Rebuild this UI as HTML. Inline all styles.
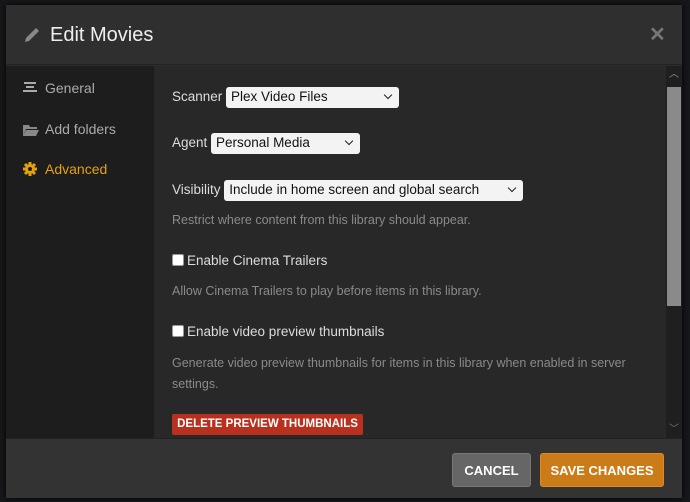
<!DOCTYPE html>
<html><head><style>
*{box-sizing:border-box;margin:0;padding:0}
body{width:690px;height:502px;background:#16181b;font-family:"Liberation Sans",sans-serif;position:relative;overflow:hidden}
.m{position:absolute;left:6px;top:5px;width:676px;height:493px;background:#2d2d2d;box-shadow:0 0 6px #000}
.hd{position:absolute;left:0;top:0;width:676px;height:60px;background:#2f2f2f;border-bottom:1px solid #222}
.hd h1{position:absolute;left:44px;top:19px;font-size:20px;font-weight:normal;color:#eee}
.x{position:absolute;left:643px;top:17px;color:#777;font-size:20px;font-weight:bold}
.sb{position:absolute;left:0;top:61px;width:148px;height:372px;background:#1d1d1d}
.sb div{position:absolute;left:39px;font-size:14px;color:#aaa}
.ct{position:absolute;left:148px;top:61px;width:512px;height:372px;background:#282828;color:#ddd;font-size:13.5px}
.ct .r{position:absolute;left:18px}
.sel{display:inline-block;background:#f3f3f3;color:#111;border-radius:3px;height:21px;padding:2px 5px;font-size:13.5px;vertical-align:middle;position:relative}
.sel:after{content:"";position:absolute;right:8px;top:5px;width:5px;height:5px;border-right:1.5px solid #222;border-bottom:1.5px solid #222;transform:rotate(45deg)}
.h{color:#8a8a8a;font-size:12.5px}
.cb{display:inline-block;width:12px;height:12px;background:#fff;border:1px solid #999;border-radius:2px;vertical-align:-1px;margin-right:3px}
.scr{position:absolute;left:660px;top:61px;width:16px;height:372px;background:#1f1f1f}
.ft{position:absolute;left:0;top:433px;width:676px;height:60px;background:#333;border-top:1px solid #222}
.btn{position:absolute;top:14px;height:34px;border-radius:3px;color:#fff;font-weight:bold;font-size:13px;text-align:center;line-height:34px}
</style></head><body>
<div class="m">
<div class="hd">
<svg style="position:absolute;left:17px;top:21px" width="18" height="18" viewBox="0 0 18 18"><path d="M2 16 L3 12 L13 2 L16 5 L6 15 Z" fill="#888"/></svg>
<h1>Edit Movies</h1><div class="x">✕</div></div>
<div class="sb">
<svg style="position:absolute;left:17px;top:16px" width="14" height="12"><rect x="1" y="0" width="12" height="2" fill="#aaa"/><rect x="3" y="4" width="8" height="2" fill="#aaa"/><rect x="0" y="8" width="14" height="2" fill="#aaa"/></svg>
<div style="top:14px">General</div>
<svg style="position:absolute;left:17px;top:57px" width="16" height="13"><path d="M0 2h6l1 2h7v2H3L0 13Z M3 7h13l-3 6H0Z" fill="#888"/></svg>
<div style="top:55px">Add folders</div>
<svg style="position:absolute;left:17px;top:96px" width="14" height="14" viewBox="0 0 14 14"><circle cx="7" cy="7" r="5" fill="#e5a00d"/><g stroke="#e5a00d" stroke-width="3"><path d="M7 0v14M0 7h14M2 2l10 10M12 2L2 12"/></g><circle cx="7" cy="7" r="2" fill="#1d1d1d"/></svg>
<div style="top:95px;color:#e5a00d">Advanced</div>
</div>
<div class="ct">
<div class="r" style="top:21px">Scanner <span class="sel" style="width:173px">Plex Video Files</span></div>
<div class="r" style="top:67px">Agent <span class="sel" style="width:149px">Personal Media</span></div>
<div class="r" style="top:114px">Visibility <span class="sel" style="width:299px">Include in home screen and global search</span></div>
<div class="r h" style="top:147px">Restrict where content from this library should appear.</div>
<div class="r" style="top:187px"><span class="cb"></span>Enable Cinema Trailers</div>
<div class="r h" style="top:218px">Allow Cinema Trailers to play before items in this library.</div>
<div class="r" style="top:258px"><span class="cb"></span>Enable video preview thumbnails</div>
<div class="r h" style="top:287px;width:480px;line-height:21px">Generate video preview thumbnails for items in this library when enabled in server settings.</div>
<div class="r" style="top:348px;width:191px;height:21px;background:#b8311f;border-radius:2px;color:#fff;font-size:11.5px;font-weight:bold;text-align:center;line-height:21px">DELETE PREVIEW THUMBNAILS</div>
</div>
<div class="scr">
<div style="position:absolute;left:0;top:0;width:16px;height:16px;color:#999;font-size:10px;text-align:center;line-height:18px">︿</div>
<div style="position:absolute;left:1px;top:21px;width:14px;height:219px;background:#8a8a8a"></div>
<div style="position:absolute;left:0;bottom:0;width:16px;height:16px;color:#777;font-size:10px;text-align:center;line-height:16px">﹀</div>
</div>
<div class="ft">
<div class="btn" style="left:446px;width:79px;background:#666;border:1px solid #777">CANCEL</div>
<div class="btn" style="left:534px;width:124px;background:#cc7b19;border:1px solid #e08a20">SAVE CHANGES</div>
</div>
</div>
</body></html>
